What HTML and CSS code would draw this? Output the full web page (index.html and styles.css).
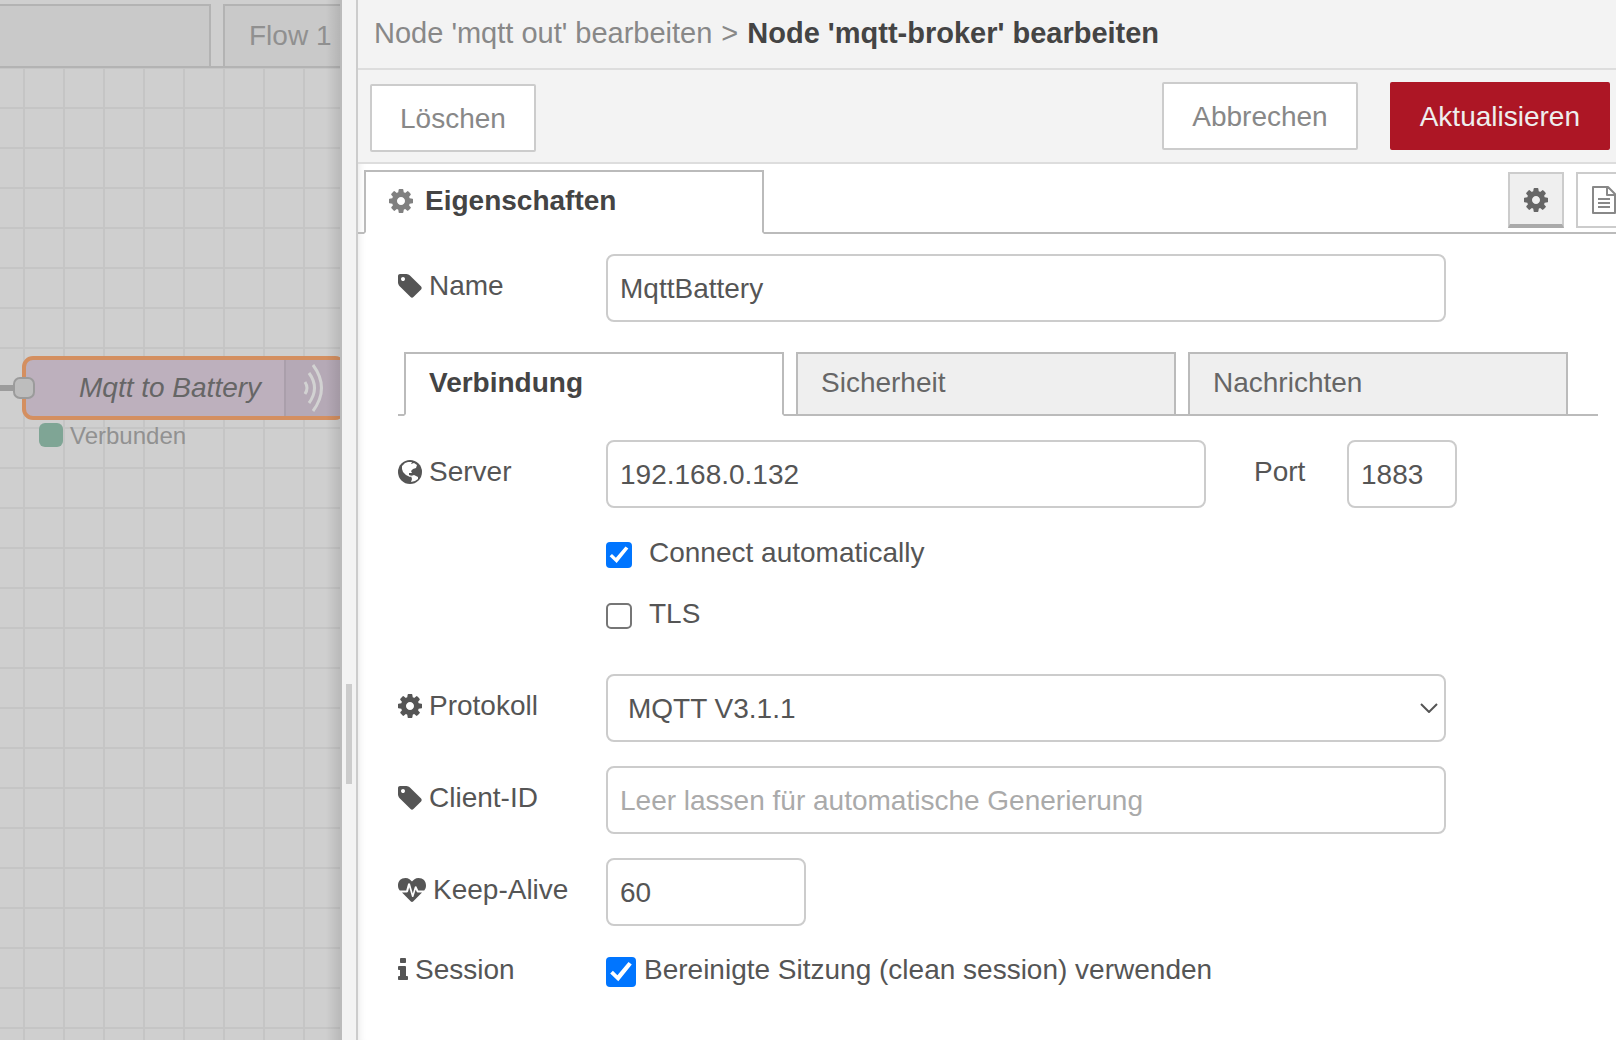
FILE: index.html
```html
<!DOCTYPE html>
<html lang="de">
	<head>
		<meta charset="utf-8">
		<title>Node-RED</title>
		<link rel="stylesheet" href="styles.css">
	</head>
	<body>
		<svg class="icon_defs" aria-hidden="true">
			<symbol id="i_cog" viewBox="128 128 1536 1536"><path d="M1152 896q0-106-75-181t-181-75-181 75-75 181 75 181 181 75 181-75 75-181zm512-109v222q0 12-8 23t-20 13l-185 28q-19 54-39 91 35 50 107 138 10 12 10 25t-9 23q-27 37-99 108t-94 71q-12 0-26-9l-138-108q-44 23-91 38-16 136-29 186-7 28-36 28h-222q-14 0-24.500-8.500t-11.500-21.500l-28-184q-49-16-90-37l-141 107q-10 9-25 9-14 0-25-11-126-114-165-168-7-10-7-23 0-12 8-23 15-21 51-66.500t54-70.500q-27-50-41-99l-183-27q-13-2-21-12.500t-8-23.500v-222q0-12 8-23t19-13l186-28q14-46 39-92-40-57-107-138-10-12-10-24 0-10 9-23 26-36 98.500-107.500t94.500-71.500q13 0 26 10l138 107q44-23 91-38 16-136 29-186 7-28 36-28h222q14 0 24.500 8.500t11.500 21.500l28 184q49 16 90 37l142-107q9-9 24-9 13 0 25 10 129 119 165 170 7 8 7 22 0 12-8 23-15 21-51 66.500t-54 70.500q26 50 41 98l183 28q13 2 21 12.500t8 23.500z"/></symbol>
			<symbol id="i_tag" viewBox="128 128 1536 1536"><path d="M576 448q0-53-37.500-90.500t-90.500-37.500-90.500 37.500-37.500 90.500 37.500 90.500 90.500 37.500 90.500-37.500 37.500-90.500zm1067 576q0 53-37 90l-491 492q-39 37-91 37-53 0-90-37l-715-716q-38-37-64.500-101t-26.500-117v-416q0-52 38-90t90-38h416q53 0 117 26.500t102 64.500l715 714q37 39 37 91z"/></symbol>
			<symbol id="i_info" viewBox="576 128 640 1536"><path d="M1216 1344v128q0 26-19 45t-45 19h-512q-26 0-45-19t-19-45v-128q0-26 19-45t45-19h64v-384h-64q-26 0-45-19t-19-45v-128q0-26 19-45t45-19h384q26 0 45 19t19 45v576h64q26 0 45 19t19 45zm-128-1152v192q0 26-19 45t-45 19h-256q-26 0-45-19t-19-45v-192q0-26 19-45t45-19h256q26 0 45 19t19 45z"/></symbol>
			<symbol id="i_globe" viewBox="0 0 24 24"><circle cx="12" cy="12" r="12"/><path fill="#fff" d="M4 6L7 3L10 2L14 2L13 4L16 3L19 5L18 8L15 9L13 11L14 13L11 13L11 15L14 16L12 17L8 15L5 12L4 9ZM13 16L16 15L20 17L20 19L17 21L13 22L14 19Z"/></symbol>
			<symbol id="i_heart" viewBox="0 0 28 24"><path d="M14 24C13.500 24 13.200 23.800 12.900 23.500L4 14.500H9C9.600 14.500 10 14 10.100 13.600L11.200 9.300L13.900 18.500C14.100 19.200 15.300 19.200 15.500 18.500L17.700 11.500L18.800 14C19 14.300 19.300 14.500 19.700 14.500H24L15.100 23.500C14.800 23.800 14.500 24 14 24ZM28 7.800C28 9.700 27.200 11.400 26.200 12.500H20.300L18.500 8.700C18.200 8 17 8.100 16.800 8.800L14.800 15.400L12 5.800C11.800 5 10.300 5 10.100 5.800L8.200 12.500H1.800C.8 11.400 0 9.700 0 7.800C0 3 2.800 0 7.600 0C10.400 0 13 2.200 14 3.500C15 2.200 17.600 0 20.400 0C25.200 0 28 3 28 7.800Z"/></symbol>
			<symbol id="i_file" viewBox="0 0 24 28"><path fill="none" stroke="currentColor" stroke-width="2" stroke-linejoin="round" d="M1 1H16L23 8V27H1ZM15 1V9H23M6 13H18M6 17H18M6 21H18"/></symbol>
		</svg>

		<div id="main">
			<div id="workspace">
				<div id="flow_tabs">
					<div class="flow_tab first"></div>
					<div class="flow_tab">Flow 1</div>
				</div>
				<svg id="chart">
					<defs>
						<pattern id="grid" x="4" y="20" width="40" height="40" patternUnits="userSpaceOnUse">
							<path d="M0 20H40M20 0V40" stroke="#c5c5c5" stroke-width="2"/>
						</pattern>
					</defs>
					<rect width="100%" height="100%" fill="url(#grid)"/>
					<path class="wire" d="M0 320H20"/>
					<rect class="node" x="24" y="290" width="320" height="60" rx="9"/>
					<path class="node_icon_bg" d="M286 292H342V348H286Z"/>
					<path class="node_divider" d="M285 292V348"/>
					<g class="waves">
						<path d="M305 314Q309 320 305 326"/>
						<path d="M309 305Q320 320 309 335"/>
						<path d="M313 297Q330 320 313 343"/>
					</g>
					<rect class="node_port" x="14" y="310" width="20" height="20" rx="6"/>
					<text class="node_label" x="79" y="329">Mqtt to Battery</text>
					<rect class="status_dot" x="39" y="355" width="24" height="24" rx="6"/>
					<text class="status_label" x="70" y="376">Verbunden</text>
				</svg>
				<div id="workspace_shadow"></div>
			</div>

			<div id="separator"><div id="handle"></div></div>

			<div id="tray">
				<div id="tray_header">
					<span>Node 'mqtt out' bearbeiten</span>
					<span>&gt;</span>
					<b>Node 'mqtt-broker' bearbeiten</b>
				</div>
				<div id="tray_toolbar">
					<button class="btn delete">Löschen</button>
					<div class="btn_group">
						<button class="btn">Abbrechen</button>
						<button class="btn primary">Aktualisieren</button>
					</div>
				</div>
				<div id="tray_tabs">
					<div class="tab active"><svg class="icon"><use href="#i_cog"/></svg>Eigenschaften</div>
					<div class="tab_buttons">
						<button class="icon_btn selected" aria-label="Eigenschaften"><svg class="icon"><use href="#i_cog"/></svg></button>
						<button class="icon_btn" aria-label="Beschreibung"><svg class="icon file"><use href="#i_file"/></svg></button>
					</div>
				</div>

				<form id="edit_form">
					<div class="form_row">
						<label class="name" for="name"><svg class="icon"><use href="#i_tag"/></svg>Name</label>
						<input class="text wide" id="name" type="text" value="MqttBattery">
					</div>

					<div id="form_tabs">
						<button type="button" class="tab active">Verbindung</button>
						<button type="button" class="tab">Sicherheit</button>
						<button type="button" class="tab">Nachrichten</button>
					</div>

					<div class="form_row">
						<label class="name" for="server"><svg class="icon"><use href="#i_globe"/></svg>Server</label>
						<input class="text server" id="server" type="text" value="192.168.0.132">
						<label class="port_label" for="port">Port</label>
						<input class="text port" id="port" type="text" value="1883">
					</div>
					<div class="check_rows">
						<div class="check_row">
							<input class="check" id="auto" type="checkbox" checked>
							<label for="auto">Connect automatically</label>
						</div>
						<div class="check_row">
							<input class="check" id="tls" type="checkbox">
							<label for="tls">TLS</label>
						</div>
					</div>
					<div class="form_row">
						<label class="name" for="protocol"><svg class="icon"><use href="#i_cog"/></svg>Protokoll</label>
						<div class="select_box wide">
							<select class="text" id="protocol"><option>MQTT V3.1.1</option></select>
							<svg class="chevron" viewBox="0 0 18 10"><path d="M1 1L9 9L17 1"/></svg>
						</div>
					</div>
					<div class="form_row">
						<label class="name" for="client"><svg class="icon"><use href="#i_tag"/></svg>Client-ID</label>
						<input class="text wide" id="client" type="text" placeholder="Leer lassen für automatische Generierung">
					</div>
					<div class="form_row">
						<label class="name" for="keepalive"><svg class="icon heart"><use href="#i_heart"/></svg>Keep-Alive</label>
						<input class="text keepalive" id="keepalive" type="text" value="60">
					</div>
					<div class="form_row">
						<label class="name" for="clean"><svg class="icon info"><use href="#i_info"/></svg>Session</label>
						<input class="check big" id="clean" type="checkbox" checked>
						<label for="clean">Bereinigte Sitzung (clean session) verwenden</label>
					</div>
				</form>
			</div>
		</div>
	</body>
</html>
```
FILE: styles.css
```css
*
{
	box-sizing: border-box;
}
body
{
	margin: 0;
	font-family: "Liberation Sans", Arial, sans-serif;
	font-size: 28px;
	line-height: 40px;
	color: #555;
	background: #fff;
}
button, input, select
{
	font: inherit;
	color: inherit;
}
.icon_defs
{
	display: none;
}
.icon
{
	width: 24px;
	height: 24px;
	flex: none;
	fill: currentColor;
}
.icon.file { height: 28px; }
.icon.heart { width: 28px; }
.icon.info { width: 10px; }
#main
{
	display: flex;
	height: 100vh;
	overflow: hidden;
}
/*========== workspace ==========*/
#workspace
{
	position: relative;
	flex: 0 0 342px;
	display: flex;
	flex-direction: column;
	overflow: hidden;
	background: #cfcfcf;
	border-right: 2px solid #bbb;
}
#flow_tabs
{
	display: flex;
	gap: 12px;
	height: 68px;
	padding-top: 4px;
	border-bottom: 2px solid #b3b3b3;
}
.flow_tab
{
	flex: 0 0 211px;
	padding: 10px 24px;
	background: #c9c9c9;
	border: 2px solid #b3b3b3;
	border-bottom: 0;
	color: #909090;
}
.flow_tab.first
{
	border-left: 0;
}
#chart
{
	flex: 1;
	width: 100%;
}
.wire
{
	stroke: #9c9c9c;
	stroke-width: 6;
}
.node
{
	fill: #bdb0bd;
	stroke: #d48f60;
	stroke-width: 4;
}
.node_icon_bg { fill: #b5a9b6; }
.node_divider
{
	stroke: #aa9fab;
	stroke-width: 2;
}
.waves
{
	fill: none;
	stroke: #d2d2d2;
	stroke-width: 3;
}
.node_port
{
	fill: #bdbdbd;
	stroke: #9b9b9b;
	stroke-width: 2;
}
.node_label
{
	font-style: italic;
	fill: #666;
}
.status_dot { fill: #7fa595; }
.status_label
{
	font-size: 24px;
	fill: #919191;
}
#workspace_shadow
{
	position: absolute;
	top: 0;
	right: 0;
	bottom: 0;
	width: 14px;
	background: linear-gradient(to right, rgba(0,0,0,0), rgba(0,0,0,0.1));
}
/*========== separator ==========*/
#separator
{
	flex: 0 0 16px;
	display: flex;
	align-items: center;
	padding-left: 4px;
	background: #f3f3f3;
	border-right: 2px solid #ccc;
}
#handle
{
	width: 6px;
	height: 100px;
	margin-top: 428px;
	background: #ccc;
}
/*========== tray ==========*/
#tray
{
	flex: 1;
	min-width: 0;
	overflow: hidden;
	box-shadow: inset 8px 0 8px -8px rgba(0,0,0,0.12);
}
#tray_header
{
	display: flex;
	gap: 9px;
	padding: 13px 16px 15px;
	border-bottom: 2px solid #ddd;
	background: #f3f3f3;
	color: #888;
	font-size: 29px;
}
#tray_header b
{
	color: #444;
}
#tray_toolbar
{
	display: flex;
	justify-content: space-between;
	padding: 12px 6px 12px 12px;
	border-bottom: 2px solid #ddd;
	background: #f3f3f3;
}
.btn_group
{
	display: flex;
	gap: 32px;
}
.btn
{
	height: 68px;
	padding: 2px 28px 0;
	border: 2px solid #ccc;
	border-radius: 2px;
	background: #fff;
	color: #888;
}
.btn.delete
{
	margin-top: 2px;
	margin-bottom: -2px;
}
.btn.primary
{
	border-color: #ad1625;
	background: #ad1625;
	color: #eee;
}
#tray_tabs
{
	display: flex;
	justify-content: space-between;
	height: 70px;
	padding: 6px 0 0 6px;
	box-shadow: inset 0 -2px #bbb;
}
.tab
{
	display: flex;
	align-items: center;
	gap: 12px;
	flex: 0 1 380px;
	height: 64px;
	padding: 0 23px 2px;
	border: 2px solid #bbb;
	background: #efefef;
	color: #666;
}
.tab.active
{
	border-bottom-color: #fff;
	background: #fff;
	color: #444;
	font-weight: bold;
}
#tray_tabs .tab
{
	flex-basis: 400px;
}
#tray_tabs .tab .icon
{
	color: #808080;
}
.tab_buttons
{
	display: flex;
	gap: 12px;
	margin: 2px -16px 0 0;
}
.icon_btn
{
	display: flex;
	align-items: center;
	justify-content: center;
	width: 56px;
	height: 56px;
	padding: 0;
	border: 2px solid #ccc;
	background: #fff;
	color: #888;
}
.icon_btn.selected
{
	padding-top: 2px;
	border-bottom: 4px solid #aaa;
	background: #efefef;
	color: #666;
}
/*========== form ==========*/
#edit_form
{
	padding: 20px 18px 20px 40px;
}
.form_row
{
	display: flex;
	align-items: center;
	margin-bottom: 24px;
}
label
{
	padding-bottom: 4px;
}
label.name
{
	display: flex;
	align-items: center;
	gap: 7px;
	flex: 0 0 208px;
}
.text
{
	height: 68px;
	padding: 2px 12px 0;
	border: 2px solid #ccc;
	border-radius: 8px;
	background: #fff;
}
.text::placeholder
{
	color: #aaa;
	opacity: 1;
}
.wide { width: 70%; }
.server { width: 50%; }
.port_label
{
	width: 93px;
	margin-left: 48px;
}
.port { width: 110px; }
.keepalive { width: 200px; }
.select_box
{
	position: relative;
	display: flex;
}
.select_box select
{
	width: 100%;
	padding-left: 20px;
	appearance: none;
}
.chevron
{
	position: absolute;
	top: 29px;
	right: 8px;
	width: 18px;
	height: 10px;
	fill: none;
	stroke: #555;
	stroke-width: 2;
	pointer-events: none;
}
#form_tabs
{
	display: flex;
	gap: 12px;
	margin: 30px 0 24px;
	padding: 0 30px 0 6px;
	box-shadow: inset 0 -2px #bbb;
}
.check_rows
{
	display: flex;
	flex-direction: column;
	gap: 21px;
	margin: 27px 0 38px 208px;
}
.check_row
{
	display: flex;
	align-items: center;
	gap: 17px;
	height: 40px;
}
.check
{
	flex: none;
	width: 26px;
	height: 26px;
	margin: 0;
	appearance: none;
	border: 2px solid #767676;
	border-radius: 5px;
	background: #fff;
}
.check:checked
{
	border: 0;
	border-radius: 4px;
	background: #0075ff;
}
.check:checked::before
{
	content: "";
	display: block;
	height: 100%;
	background: #fff;
	clip-path: polygon(14% 55%, 23% 46%, 38% 61%, 75% 17%, 86% 25%, 41% 81%);
}
.check.big
{
	width: 30px;
	height: 30px;
	margin-right: 8px;
}
```
